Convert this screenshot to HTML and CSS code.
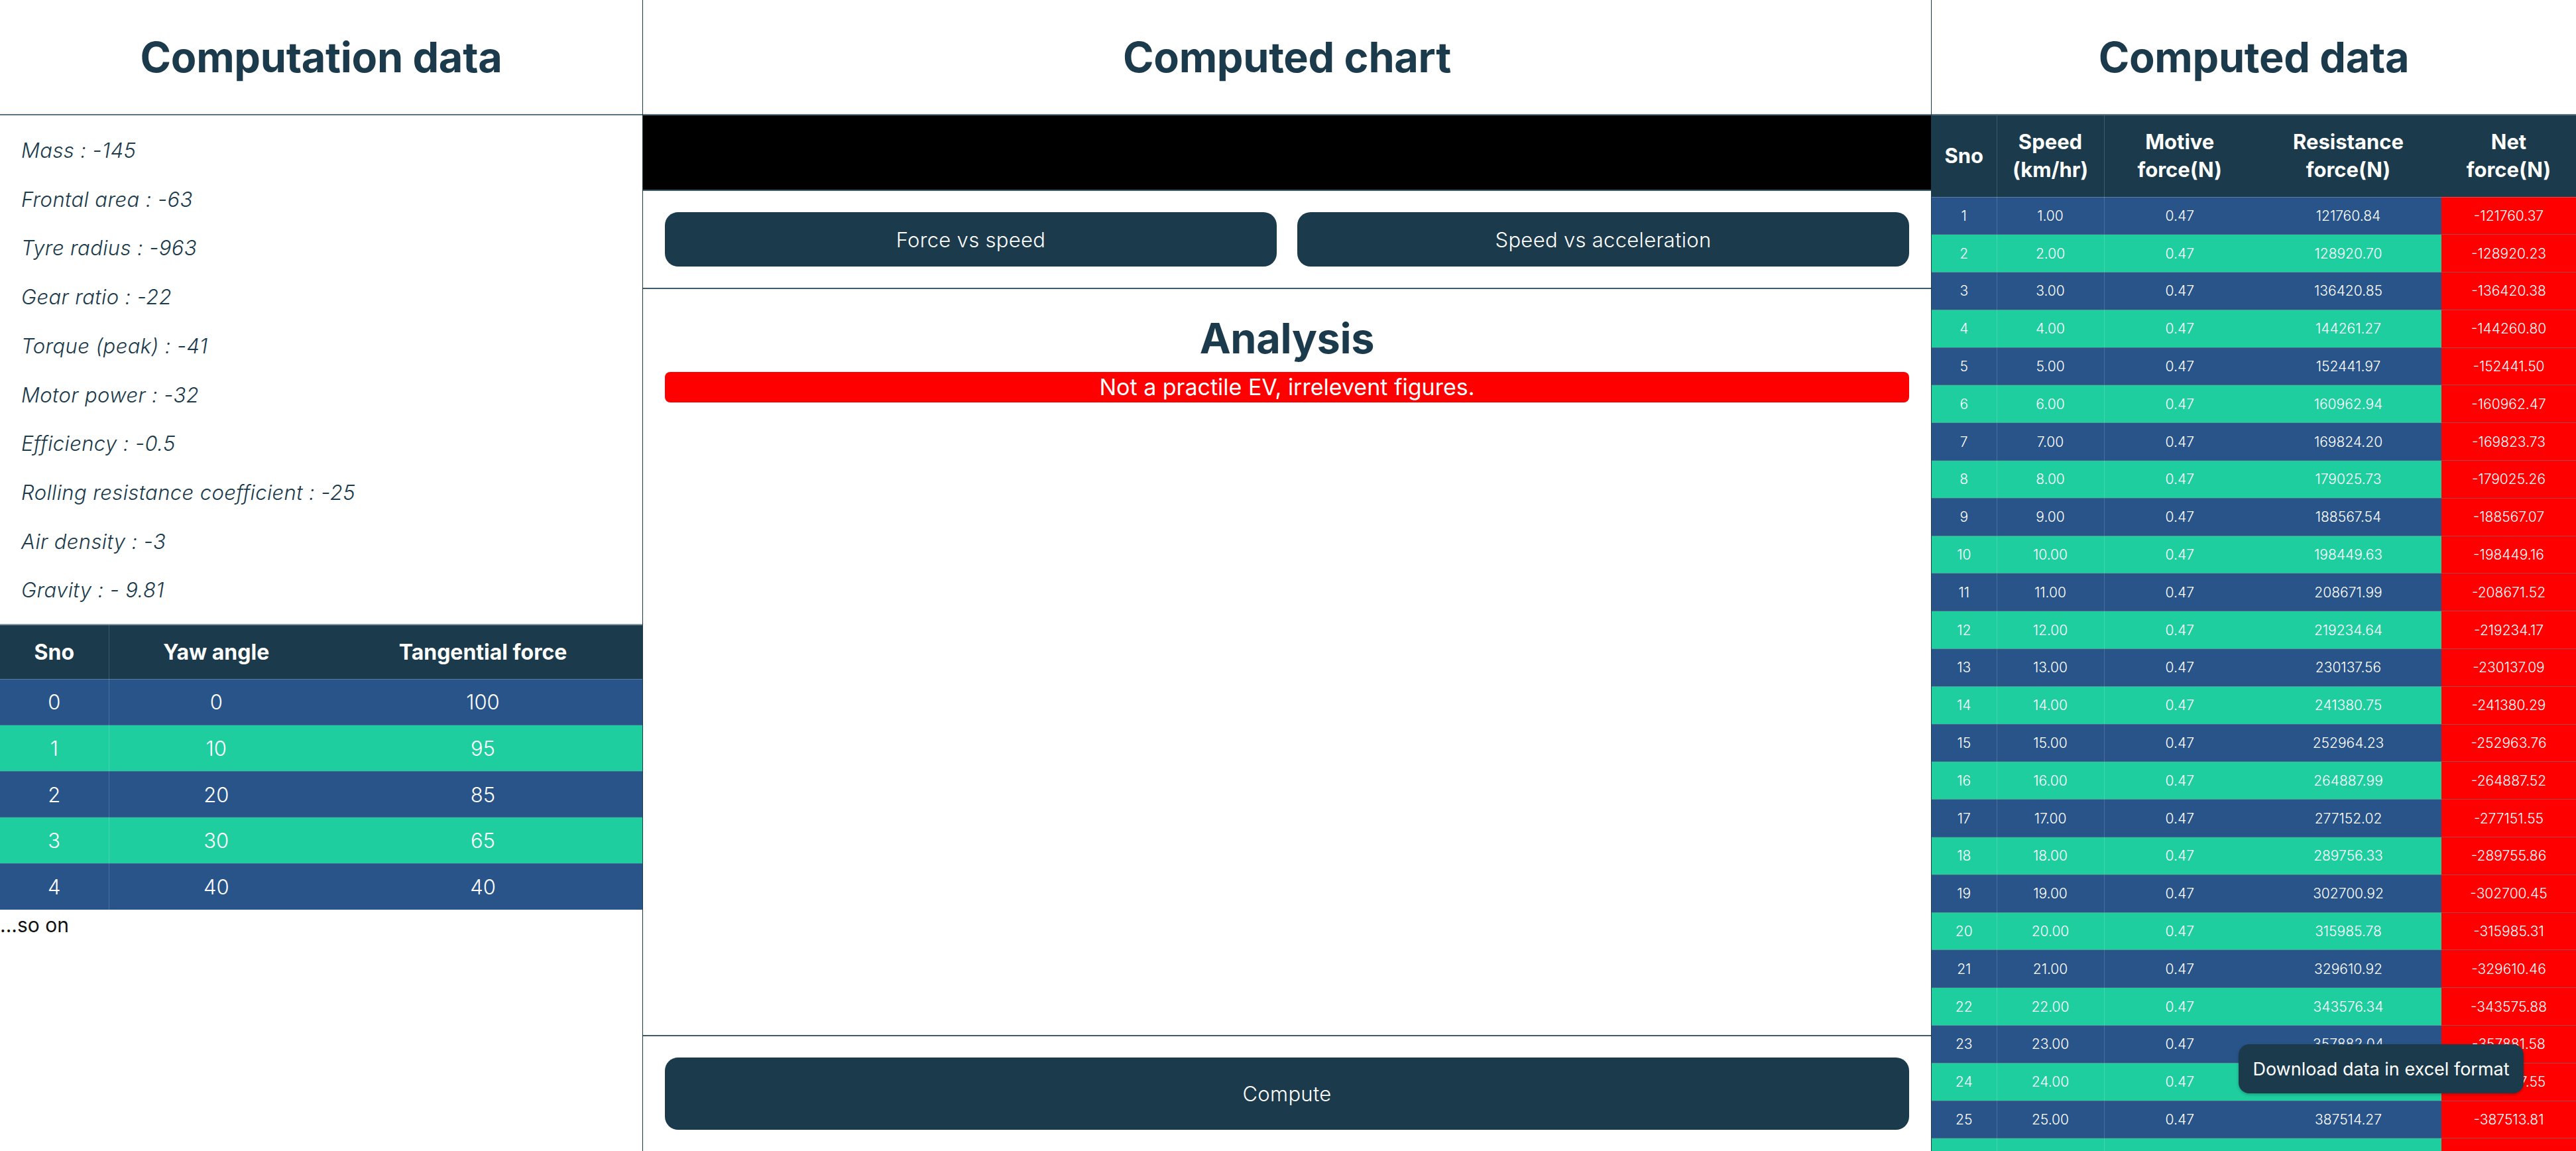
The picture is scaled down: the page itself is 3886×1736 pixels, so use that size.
FILE: index.html
```html
<!DOCTYPE html>
<html lang="en">
<head>
<meta charset="utf-8">
<title>EV computation</title>
<link rel="stylesheet" href="styles.css">
</head>
<body>
<div class="app">
  <section class="col col-left">
    <header class="col-head"><h1 class="title">Computation data</h1></header>
    <ul class="params">
      <li class="param">Mass : -145</li>
      <li class="param">Frontal area : -63</li>
      <li class="param">Tyre radius : -963</li>
      <li class="param">Gear ratio : -22</li>
      <li class="param">Torque (peak) : -41</li>
      <li class="param">Motor power : -32</li>
      <li class="param">Efficiency : -0.5</li>
      <li class="param">Rolling resistance coefficient : -25</li>
      <li class="param">Air density : -3</li>
      <li class="param">Gravity : - 9.81</li>
    </ul>
    <table class="yaw">
      <colgroup><col class="c-sno"><col class="c-yaw"><col></colgroup>
      <thead><tr><th>Sno</th><th>Yaw angle</th><th>Tangential force</th></tr></thead>
      <tbody>
        <tr class="r-blue"><td>0</td><td>0</td><td>100</td></tr>
        <tr class="r-green"><td>1</td><td>10</td><td>95</td></tr>
        <tr class="r-blue"><td>2</td><td>20</td><td>85</td></tr>
        <tr class="r-green"><td>3</td><td>30</td><td>65</td></tr>
        <tr class="r-blue"><td>4</td><td>40</td><td>40</td></tr>
      </tbody>
    </table>
    <p class="so-on">...so on</p>
  </section>

  <section class="col col-mid">
    <header class="col-head"><h1 class="title">Computed chart</h1></header>
    <div class="chart"></div>
    <div class="chart-btns">
      <button class="btn">Force vs speed</button>
      <button class="btn">Speed vs acceleration</button>
    </div>
    <div class="analysis">
      <h2 class="analysis-title">Analysis</h2>
      <div class="alert">Not a practile EV, irrelevent figures.</div>
    </div>
    <div class="compute-bar">
      <button class="btn btn-compute">Compute</button>
    </div>
  </section>

  <section class="col col-right">
    <header class="col-head"><h1 class="title">Computed data</h1></header>
    <table class="data">
      <colgroup><col class="d1"><col class="d2"><col class="d3"><col class="d4"><col class="d5"></colgroup>
      <thead>
        <tr><th>Sno</th><th>Speed<br>(km/hr)</th><th>Motive<br>force(N)</th><th>Resistance<br>force(N)</th><th>Net<br>force(N)</th></tr>
      </thead>
      <tbody>
        <tr class="r-blue"><td>1</td><td>1.00</td><td>0.47</td><td>121760.84</td><td class="net">-121760.37</td></tr>
        <tr class="r-green"><td>2</td><td>2.00</td><td>0.47</td><td>128920.70</td><td class="net">-128920.23</td></tr>
        <tr class="r-blue"><td>3</td><td>3.00</td><td>0.47</td><td>136420.85</td><td class="net">-136420.38</td></tr>
        <tr class="r-green"><td>4</td><td>4.00</td><td>0.47</td><td>144261.27</td><td class="net">-144260.80</td></tr>
        <tr class="r-blue"><td>5</td><td>5.00</td><td>0.47</td><td>152441.97</td><td class="net">-152441.50</td></tr>
        <tr class="r-green"><td>6</td><td>6.00</td><td>0.47</td><td>160962.94</td><td class="net">-160962.47</td></tr>
        <tr class="r-blue"><td>7</td><td>7.00</td><td>0.47</td><td>169824.20</td><td class="net">-169823.73</td></tr>
        <tr class="r-green"><td>8</td><td>8.00</td><td>0.47</td><td>179025.73</td><td class="net">-179025.26</td></tr>
        <tr class="r-blue"><td>9</td><td>9.00</td><td>0.47</td><td>188567.54</td><td class="net">-188567.07</td></tr>
        <tr class="r-green"><td>10</td><td>10.00</td><td>0.47</td><td>198449.63</td><td class="net">-198449.16</td></tr>
        <tr class="r-blue"><td>11</td><td>11.00</td><td>0.47</td><td>208671.99</td><td class="net">-208671.52</td></tr>
        <tr class="r-green"><td>12</td><td>12.00</td><td>0.47</td><td>219234.64</td><td class="net">-219234.17</td></tr>
        <tr class="r-blue"><td>13</td><td>13.00</td><td>0.47</td><td>230137.56</td><td class="net">-230137.09</td></tr>
        <tr class="r-green"><td>14</td><td>14.00</td><td>0.47</td><td>241380.75</td><td class="net">-241380.29</td></tr>
        <tr class="r-blue"><td>15</td><td>15.00</td><td>0.47</td><td>252964.23</td><td class="net">-252963.76</td></tr>
        <tr class="r-green"><td>16</td><td>16.00</td><td>0.47</td><td>264887.99</td><td class="net">-264887.52</td></tr>
        <tr class="r-blue"><td>17</td><td>17.00</td><td>0.47</td><td>277152.02</td><td class="net">-277151.55</td></tr>
        <tr class="r-green"><td>18</td><td>18.00</td><td>0.47</td><td>289756.33</td><td class="net">-289755.86</td></tr>
        <tr class="r-blue"><td>19</td><td>19.00</td><td>0.47</td><td>302700.92</td><td class="net">-302700.45</td></tr>
        <tr class="r-green"><td>20</td><td>20.00</td><td>0.47</td><td>315985.78</td><td class="net">-315985.31</td></tr>
        <tr class="r-blue"><td>21</td><td>21.00</td><td>0.47</td><td>329610.92</td><td class="net">-329610.46</td></tr>
        <tr class="r-green"><td>22</td><td>22.00</td><td>0.47</td><td>343576.34</td><td class="net">-343575.88</td></tr>
        <tr class="r-blue"><td>23</td><td>23.00</td><td>0.47</td><td>357882.04</td><td class="net">-357881.58</td></tr>
        <tr class="r-green"><td>24</td><td>24.00</td><td>0.47</td><td>372528.02</td><td class="net">-372527.55</td></tr>
        <tr class="r-blue"><td>25</td><td>25.00</td><td>0.47</td><td>387514.27</td><td class="net">-387513.81</td></tr>
        <tr class="r-green"><td>26</td><td>26.00</td><td>0.47</td><td>402840.80</td><td class="net">-402840.34</td></tr>
      </tbody>
    </table>
    <div class="tooltip">Download data in excel format</div>
  </section>
</div>
</body>
</html>
```

FILE: styles.css
```css
* { box-sizing: border-box; }

html, body {
  margin: 0;
  padding: 0;
  height: 100%;
  background: #ffffff;
}

body {
  font-family: Inter, "DejaVu Sans", sans-serif;
  color: #1b3a4b;
  overflow: hidden;
}

.app {
  display: grid;
  grid-template-columns: 970px 1fr 972px;
  height: 100vh;
  overflow: hidden;
}

.col {
  display: flex;
  flex-direction: column;
  min-height: 0;
  overflow: hidden;
}

.col-left { border-right: 1px solid #1b3a4b; }
.col-mid { border-right: 1px solid #1b3a4b; }
.col-right { position: relative; }

.col-head {
  height: 174px;
  flex: 0 0 174px;
  display: flex;
  align-items: center;
  justify-content: center;
  border-bottom: 2px solid #5d7382;
}

.title {
  margin: 0;
  font-size: 63px;
  font-weight: 700;
  letter-spacing: -0.3px;
  color: #1b3a4b;
}

/* left column */
.params {
  list-style: none;
  margin: 0;
  padding: 16px 32px 14px;
}

.param {
  font-size: 31px;
  line-height: 73.7px;
  font-style: italic;
  font-weight: 300;
  letter-spacing: 0.4px;
  color: #1b3a4b;
}

.yaw {
  width: 100%;
  border-collapse: collapse;
  table-layout: fixed;
  color: #ffffff;
  border-top: 2px solid #8896a0;
}

.yaw .c-sno { width: 164px; }
.yaw .c-yaw { width: 324px; }

.yaw th {
  background: #1b3a4b;
  height: 82px;
  font-size: 32px;
  font-weight: 700;
  text-align: center;
  border-bottom: 1px solid rgba(255, 255, 255, 0.22);
}

.yaw td {
  height: 69.6px;
  font-size: 31px;
  font-weight: 300;
  text-align: center;
  border-bottom: 1px solid rgba(255, 255, 255, 0.12);
}

.yaw th:first-child, .yaw td:first-child {
  border-right: 1px solid rgba(255, 255, 255, 0.16);
}

.r-blue { background: #29548a; }
.r-green { background: #1fce9f; }

.so-on {
  margin: 4px 0 0;
  font-size: 30px;
  font-weight: 400;
  color: #111;
  line-height: 36px;
}

/* middle column */
.chart {
  flex: 0 0 114px;
  background: #000000;
  border-bottom: 2px solid #3f5b6c;
}

.chart-btns {
  display: flex;
  gap: 31px;
  padding: 32px 33px;
  border-bottom: 2px solid #3f5b6c;
}

.btn {
  flex: 1;
  height: 82px;
  border: none;
  border-radius: 20px;
  background: #1b3a4b;
  color: #ffffff;
  font-family: Inter, "DejaVu Sans", sans-serif;
  font-size: 31px;
  font-weight: 300;
  letter-spacing: 0.3px;
}

.analysis {
  flex: 1;
  padding: 0 33px;
}

.analysis-title {
  margin: 36px 0 12px;
  font-size: 63px;
  font-weight: 700;
  line-height: 77px;
  text-align: center;
  letter-spacing: -0.3px;
  color: #1b3a4b;
}

.alert {
  height: 46px;
  border-radius: 8px;
  background: #ff0000;
  color: #ffffff;
  font-size: 34px;
  line-height: 46px;
  text-align: center;
}

.compute-bar {
  border-top: 2px solid #3f5b6c;
  padding: 32px 33px;
}

.btn-compute {
  width: 100%;
  height: 109px;
}

/* right column */
.data {
  width: 100%;
  border-collapse: collapse;
  table-layout: fixed;
  color: #ffffff;
}

.data .d1 { width: 98px; }
.data .d2 { width: 162px; }
.data .d3 { width: 228px; }
.data .d4 { width: 281px; }
.data .d5 { width: 203px; }

.data th {
  background: #1b3a4b;
  height: 123px;
  font-size: 31px;
  font-weight: 700;
  line-height: 42px;
  text-align: center;
  border-bottom: 1px solid rgba(255, 255, 255, 0.25);
}

.data td {
  height: 56.8px;
  font-size: 21px;
  font-weight: 300;
  text-align: center;
  border-bottom: 1px solid rgba(110, 120, 135, 0.55);
}

.data th:nth-child(-n+2), .data td:nth-child(-n+2) {
  border-right: 1px solid rgba(255, 255, 255, 0.16);
}

.data td.net { background: #ff0000; }

.tooltip {
  position: absolute;
  top: 1575px;
  right: 79px;
  width: 430px;
  height: 74px;
  display: flex;
  align-items: center;
  justify-content: center;
  border-radius: 16px;
  background: #1b3a4b;
  color: #ffffff;
  font-size: 27px;
  font-weight: 400;
  box-shadow: 0 2px 4px rgba(0, 0, 0, 0.25);
}
```
